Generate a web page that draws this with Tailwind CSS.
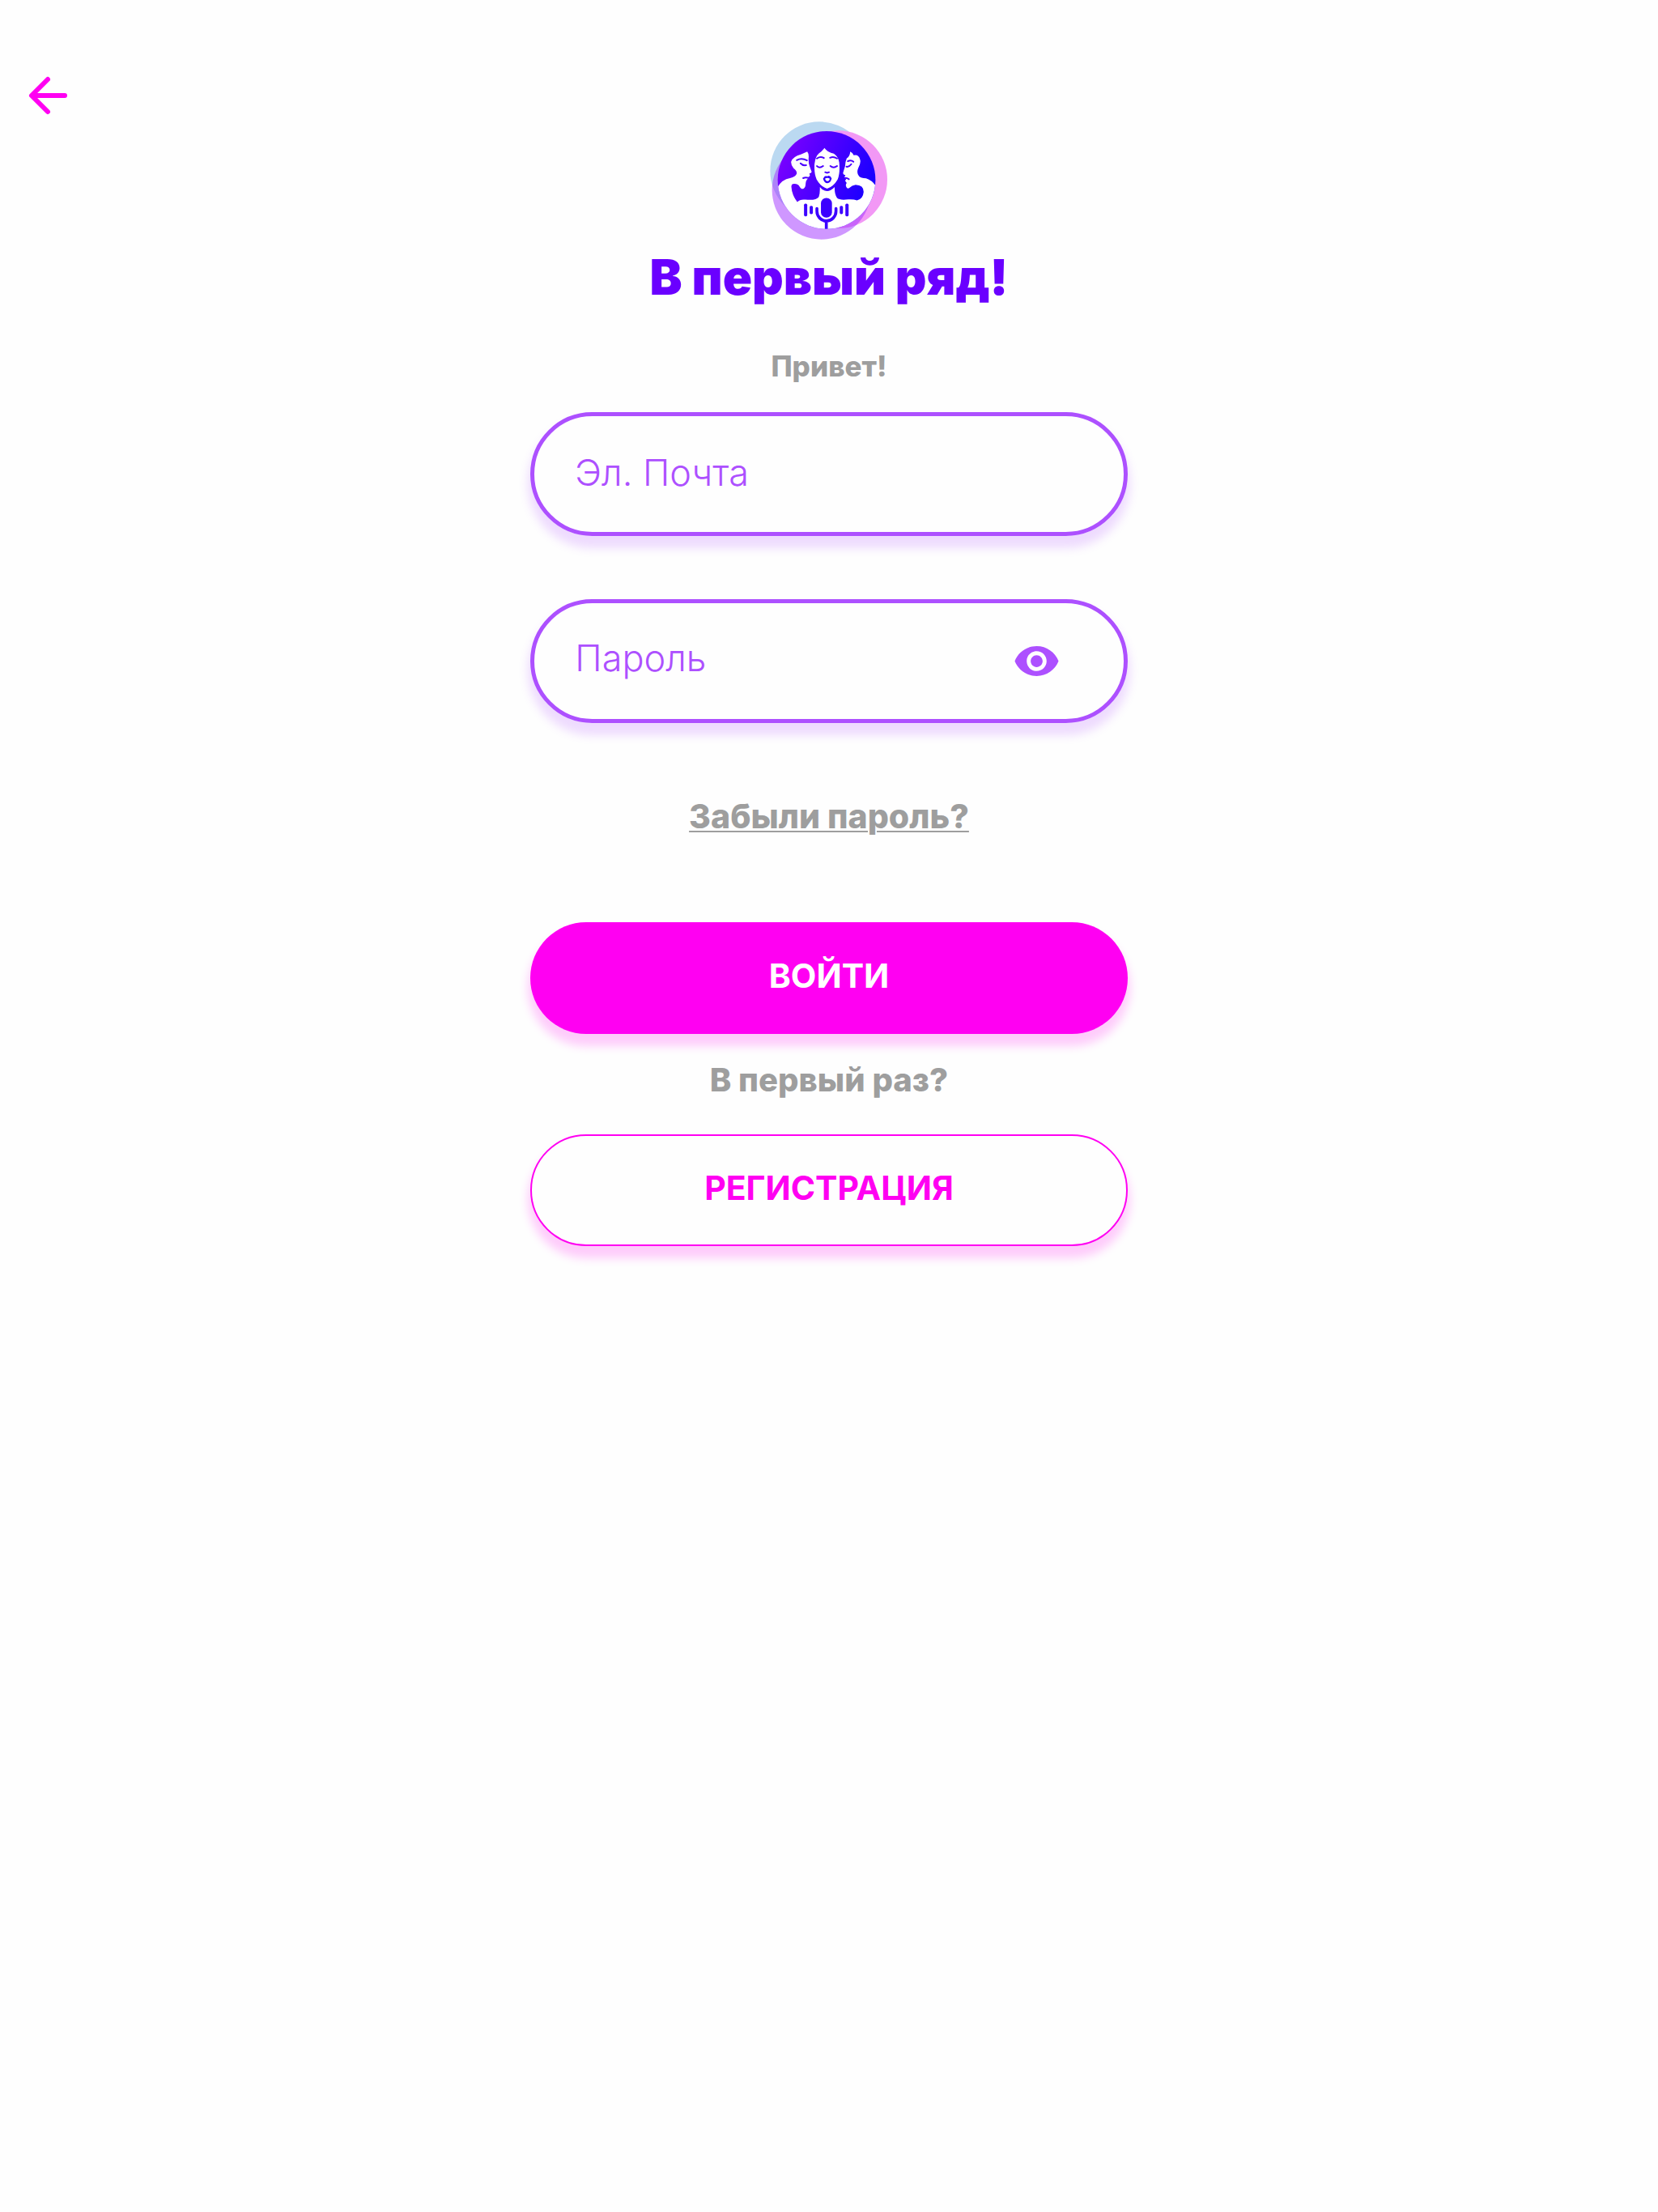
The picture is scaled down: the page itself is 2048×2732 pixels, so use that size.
<!DOCTYPE html>
<html lang="ru">
<head>
<meta charset="utf-8">
<meta name="viewport" content="width=device-width, initial-scale=1">
<title>В первый ряд!</title>
<script src="https://cdn.jsdelivr.net/npm/@tailwindcss/browser@4"></script>
</head>
<body class="min-h-screen bg-[#fefefe] font-['Inter',sans-serif]">
<header class="flex h-[150px] items-start px-8 pt-[90px]">
  <button type="button" aria-label="Назад" class="block text-[#ff00f2]">
    <svg class="block h-14 w-14" viewBox="0 0 56 56" fill="none" stroke="currentColor" stroke-width="6" stroke-linecap="round" stroke-linejoin="round"><path d="M27 8 7 28l20 20M8 28h40"/></svg>
  </button>
</header>
<main class="mx-auto flex w-[36%] flex-col items-center">
  <svg class="block h-[146px] w-[146px]" viewBox="33 28 440 440" role="img" aria-label="Логотип">
    <defs>
      <linearGradient id="sky" x1="0" y1=".3" x2="1" y2=".7"><stop offset="0" stop-color="#7a00ff"/><stop offset="1" stop-color="#1000ff"/></linearGradient>
      <clipPath id="disc"><circle cx="244" cy="246" r="182"/></clipPath>
    </defs>
    <circle cx="217" cy="212" r="183" fill="#bbd9f1"/>
    <circle cx="288" cy="244" r="182" fill="#f298f5"/>
    <circle cx="225" cy="283" r="184" fill="#a030ff" fill-opacity=".5"/>
    <circle cx="244" cy="246" r="182" fill="url(#sky)"/>
    <g clip-path="url(#disc)">
      <path fill="#fff" d="M60 275Q78 243 108 239Q129 235 133 222Q134 212 121 202Q111 190 112 178Q116 160 150 150L172 140Q179 148 177 166Q176 182 181 195L188 214Q190 220 180 222L182 230L176 236Q178 240 171 244Q166 250 166 260Q166 274 157 279Q148 280 142 268Q137 260 125 260Q112 259 113 272Q115 302 135 328Q145 317 165 319Q205 323 215 309Q220 296 219 272Q245 303 274 272Q273 299 283 313Q293 322 325 318Q346 317 357 322Q380 316 382 290Q382 265 352 264Q338 266 330 274Q322 281 318 273Q313 264 319 257L313 249L317 243L310 237L314 228Q303 226 306 217L313 194Q313 179 319 165Q331 158 332 140Q341 143 345 154Q364 150 369 171Q372 183 362 201Q354 219 365 232Q371 239 391 240Q414 247 430 272V435H60Z"/>
      <path fill="#fff" d="M236 127Q248 144 271 148Q287 158 291 180Q295 221 285 244Q270 270 246 278Q223 271 207 244Q197 222 199 187Q202 158 216 146Q228 139 236 127Z"/>
      <g fill="none" stroke="#4a00ff" stroke-width="6" stroke-linecap="round">
        <path d="M133 172Q151 162 171 173M147 184Q155 193 168 191M157 239Q165 235 176 238"/>
        <path d="M208 166Q221 157 234 164M257 163Q270 157 283 166M208 194Q218 204 231 194M258 194Q270 204 283 194M239 217Q246 221 253 217"/>
        <path d="M323 176Q335 170 344 178M318 196Q327 199 336 187M313 238Q321 238 327 243"/>
      </g>
      <path fill="#3300ff" fill-rule="evenodd" d="M231 241Q238 227 246 232Q256 226 263 240Q259 258 247 258Q235 257 231 241ZM238 241Q247 236 256 241Q254 250 247 250Q240 249 238 241Z"/>
      <g fill="#3c00ff">
        <rect x="223" y="313" width="41" height="73" rx="20"/>
        <rect x="160" y="334" width="12" height="47" rx="5"/><rect x="181" y="342" width="12" height="31" rx="5"/>
        <rect x="293" y="342" width="12" height="31" rx="5"/><rect x="314" y="334" width="12" height="47" rx="5"/>
      </g>
      <path d="M208 352V362A35 36 0 0 0 279 362V352M243 399V430" fill="none" stroke="#3c00ff" stroke-width="11" stroke-linecap="round"/>
    </g>
  </svg>
  <h1 class="mt-3 text-[60px] leading-[68px] font-black whitespace-nowrap text-[#6a00ff]">В первый ряд!</h1>
  <p class="mt-[54px] text-[35px] leading-[44px] font-extrabold text-[#9e9e9e]">Привет!</p>
  <form class="flex w-full flex-col items-center pt-[35px]">
    <input type="email" aria-label="Эл. Почта" placeholder="Эл. Почта" class="h-[153px] w-full rounded-full border-5 border-[#ad50ff] px-[50px] pb-1 text-[45px] font-light text-[#ad50ff] shadow-[0_12px_12px_3px_#ad50ff33] outline-none placeholder:text-[#ad50ff] placeholder:opacity-100">
    <div class="mt-[78px] flex h-[153px] w-full items-center rounded-full border-5 border-[#ad50ff] pr-[78px] pl-[50px] shadow-[0_12px_12px_3px_#ad50ff33]">
      <input type="password" aria-label="Пароль" placeholder="Пароль" class="min-w-0 flex-1 pb-2 text-[45px] font-light text-[#ad50ff] outline-none placeholder:text-[#ad50ff] placeholder:opacity-100">
      <button type="button" aria-label="Показать пароль" class="block text-[#ad50ff]">
        <svg class="block h-[59px] w-[59px]" viewBox="0 0 24 24" fill="currentColor"><path d="M12 4.500C7 4.500 2.730 7.610 1 12c1.730 4.390 6 7.500 11 7.500s9.270-3.110 11-7.500c-1.730-4.390-6-7.500-11-7.500zM12 17c-2.760 0-5-2.240-5-5s2.240-5 5-5 5 2.240 5 5-2.240 5-5 5zm0-8c-1.660 0-3 1.340-3 3s1.340 3 3 3 3-1.340 3-3-1.340-3-3-3z"/></svg>
      </button>
    </div>
    <a href="#" class="mt-[90px] text-[41px] leading-[50px] font-extrabold whitespace-nowrap text-[#9e9e9e] underline decoration-2 underline-offset-3">Забыли пароль?</a>
    <button type="submit" class="mt-[106px] h-[138px] w-full rounded-full bg-[#ff00f2] pb-1 text-[41px] font-bold text-white shadow-[0_12px_12px_3px_#ff00f233]">ВОЙТИ</button>
    <p class="mt-8 text-[40px] leading-[50px] font-extrabold whitespace-nowrap text-[#9e9e9e]">В первый раз?</p>
    <button type="button" class="mt-[42px] h-[138px] w-full rounded-full border-2 border-[#ff00f2] bg-[#fefefe] pb-1 text-[41px] font-bold text-[#ff00f2] shadow-[0_12px_12px_3px_#ff00f233]">РЕГИСТРАЦИЯ</button>
  </form>
</main>
</body>
</html>
